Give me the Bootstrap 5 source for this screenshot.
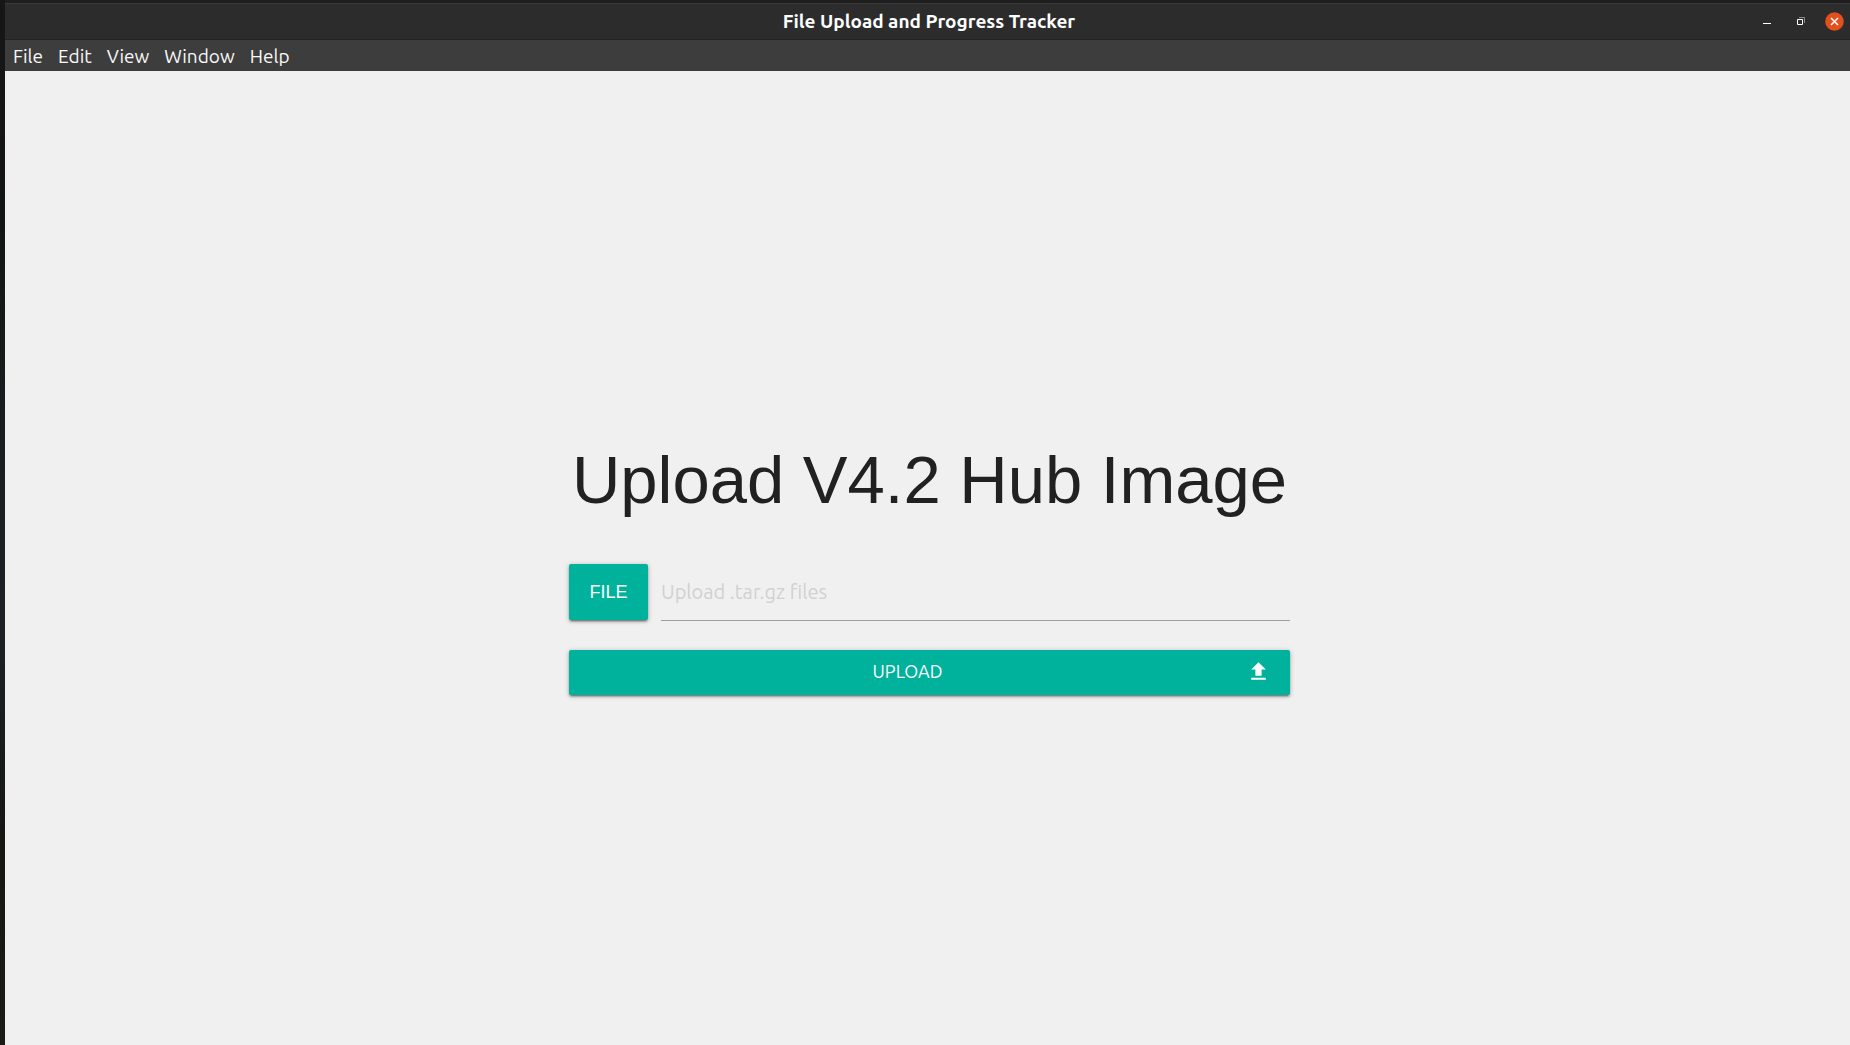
<!DOCTYPE html>
<html lang="en">
<head>
<meta charset="utf-8">
<meta name="viewport" content="width=device-width, initial-scale=1">
<title>File Upload and Progress Tracker</title>
<link href="https://cdn.jsdelivr.net/npm/bootstrap@5.3.0/dist/css/bootstrap.min.css" rel="stylesheet">
<style>
  body { font-family: Ubuntu, "Noto Sans", sans-serif; background: #f0f0f0; color: #212121; }
  .desk-edge { width: 5px; background: linear-gradient(#161616, #131414 20%, #1b1e21 45%, #1d2125 60%, #161715 80%, #1a1a17); }
  .title-bar { height: 40px; background: #2c2c2c; border-top: 3px solid #1e1e1e; border-bottom: 1px solid #232323; box-shadow: inset 0 1px #3a3a3a; }
  .title-text { font-size: 19px; line-height: 24px; color: #fff; padding-left: 3px; }
  .win-controls { right: 6px; gap: 15px; }
  .win-controls button { width: 19px; height: 19px; }
  .menu-strip { height: 31px; background: #3d3d3d; padding-left: 8px; gap: 15px; }
  .menu-strip button { font-size: 19px; line-height: 28px; color: #f8f8f8; }
  .win-controls svg { display: block; }
  .upload-panel { width: 721px; max-width: 100%; padding: 44px 0 22px; }
  .panel-title { font-family: "Liberation Sans", Arial, sans-serif; font-size: 67px; line-height: 74px; margin-bottom: 47px; white-space: nowrap; }
  .btn-teal { --bs-btn-color: #fff; --bs-btn-bg: #00b29c; --bs-btn-hover-color: #fff; --bs-btn-hover-bg: #11c4ae; --bs-btn-active-color: #fff; --bs-btn-active-bg: #009d8a;
    --bs-btn-border-width: 0; --bs-btn-border-radius: 2px; --bs-btn-padding-x: 19px; --bs-btn-padding-y: 0; --bs-btn-font-size: 18px;
    box-shadow: 0 2px 2px rgba(0,0,0,.2), 0 3px 1px -2px rgba(0,0,0,.2), 0 1px 5px rgba(0,0,0,.28); }
  .btn-file { width: 79px; height: 56px; font-family: "Liberation Sans", Arial, sans-serif; }
  .btn-send { height: 45px; gap: 19px; padding-bottom: 2px; }
  .file-row { gap: 13px; margin-bottom: 30px; }
  .file-path { height: 57px; font-size: 20px; padding: 0 0 2px; border: 0; border-bottom: 1px solid #9e9e9e; border-radius: 0; background: transparent; margin-bottom: -1px; }
  .file-path:focus { background: transparent; border-color: #00b29c; box-shadow: 0 1px #00b29c; }
  .file-path::placeholder { color: #d1d1d1; }
</style>
</head>
<body>
<div class="d-flex min-vh-100">
  <div class="desk-edge flex-shrink-0"></div>
  <div class="d-flex flex-column flex-grow-1">
    <header>
      <div class="title-bar position-relative d-flex align-items-center justify-content-center">
        <div class="title-text fw-bold">File Upload and Progress Tracker</div>
        <div class="win-controls position-absolute d-flex">
          <button type="button" class="btn p-0 border-0" aria-label="Minimize"><svg width="19" height="19"><path d="M6 11h8v1H6z" fill="#fff"/></svg></button>
          <button type="button" class="btn p-0 border-0" aria-label="Restore"><svg width="19" height="19" fill="none"><path d="M8 5.500H13.500V11" stroke="#8c8c8c"/><path d="M6.500 7.500h5v5h-5z" stroke="#fff"/></svg></button>
          <button type="button" class="btn p-0 border-0" aria-label="Close"><svg width="19" height="19"><circle cx="9.500" cy="9.500" r="9.300" fill="#e2501d"/><path d="M6 6l7 7M13 6l-7 7" stroke="#fff" stroke-width="1.500"/></svg></button>
        </div>
      </div>
      <nav class="menu-strip d-flex align-items-center" aria-label="Application menu">
        <button type="button" class="btn p-0 border-0">File</button>
        <button type="button" class="btn p-0 border-0">Edit</button>
        <button type="button" class="btn p-0 border-0">View</button>
        <button type="button" class="btn p-0 border-0">Window</button>
        <button type="button" class="btn p-0 border-0">Help</button>
      </nav>
    </header>
    <main class="d-flex flex-grow-1 align-items-center justify-content-center ps-1">
      <form class="upload-panel">
        <h1 class="panel-title fw-normal text-center">Upload V4.2 Hub Image</h1>
        <div class="file-row d-flex">
          <button type="button" class="btn btn-teal btn-file flex-shrink-0">FILE</button>
          <input type="text" class="file-path form-control" placeholder="Upload .tar.gz files" aria-label="Selected file">
        </div>
        <button type="submit" class="btn btn-teal btn-send w-100 d-flex align-items-center">
          <span class="flex-grow-1">UPLOAD</span>
          <svg width="25" height="25" viewBox="0 0 24 24" fill="#fff" aria-hidden="true"><path d="M9 16h6v-6h4l-7-7-7 7h4zm-4 2h14v2H5z"/></svg>
        </button>
      </form>
    </main>
  </div>
</div>
<script src="https://cdn.jsdelivr.net/npm/bootstrap@5.3.0/dist/js/bootstrap.bundle.min.js"></script>
</body>
</html>
